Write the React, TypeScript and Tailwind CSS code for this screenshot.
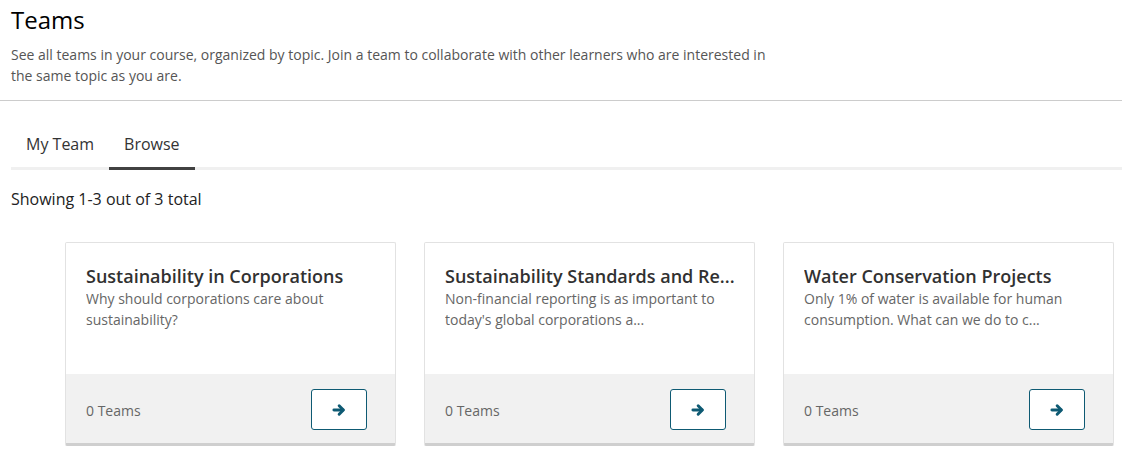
const topics = [
  {
    name: 'Sustainability in Corporations',
    description: 'Why should corporations care about sustainability?',
  },
  {
    name: 'Sustainability Standards and Re...',
    description: "Non-financial reporting is as important to today's global corporations a...",
  },
  {
    name: 'Water Conservation Projects',
    description: 'Only 1% of water is available for human consumption. What can we do to c...',
  },
];

function ArrowIcon() {
  return (
    <svg width="14" height="14" viewBox="0 0 16 16" fill="none" stroke="currentColor" strokeWidth="3.4" strokeLinecap="round" strokeLinejoin="round">
      <path d="M2.2 8H12.6" />
      <path d="M8.2 3.2L13 8L8.2 12.8" />
    </svg>
  );
}

export default function App() {
  return (
    <div className="w-[1122px] h-[455px] bg-white overflow-hidden font-['Open_Sans',sans-serif]">
      {/* Header */}
      <div className="px-[11px] pt-[5px] pb-[14px] border-b border-[#cccccc]">
        <h1 className="text-[24px] leading-[30px] text-black">Teams</h1>
        <p className="mt-[9px] text-[14px] leading-[21px] text-[#555555] w-[770px]">
          See all teams in your course, organized by topic. Join a team to collaborate with other learners who are interested in the same topic as you are.
        </p>
      </div>

      {/* Tabs */}
      <div className="ml-[11px] mt-[32px] flex border-b-[3px] border-[#f0f0f0]">
        <div className="px-[15px] pb-[12px] text-[16px] leading-[22px] text-[#333333]">My Team</div>
        <div className="relative px-[15px] pb-[12px] text-[16px] leading-[22px] text-[#333333]">
          Browse
          <div className="absolute left-0 right-0 -bottom-[3px] h-[3px] bg-[#414141]" />
        </div>
      </div>

      <p className="px-[11px] mt-[18px] text-[16px] leading-[22px] text-[#222222]">Showing 1-3 out of 3 total</p>

      {/* Cards */}
      <div className="mt-[32px] pl-[65px] flex gap-[28px]">
        {topics.map((t) => (
          <div
            key={t.name}
            className="w-[331px] h-[204px] flex flex-col border border-[#e2e2e2] border-b-[3px] border-b-[#cfcfcf] rounded-[2px] bg-white"
          >
            <div className="flex-1 px-[20px] pt-[21px]">
              <h3 className="text-[18px] leading-[24px] font-semibold text-[#313131] whitespace-nowrap overflow-hidden">{t.name}</h3>
              <p className="text-[14px] leading-[21px] text-[#666666] line-clamp-2">{t.description}</p>
            </div>
            <div className="h-[69px] bg-[#f1f1f1] flex items-center justify-between pl-[20px] pr-[28px]">
              <span className="text-[14px] text-[#666666] mt-[4px]">0 Teams</span>
              <button className="w-[56px] h-[41px] mt-[2px] border border-[#0e5a73] rounded-[3px] bg-white flex items-center justify-center text-[#0e5a73]">
                <ArrowIcon />
              </button>
            </div>
          </div>
        ))}
      </div>
    </div>
  );
}
